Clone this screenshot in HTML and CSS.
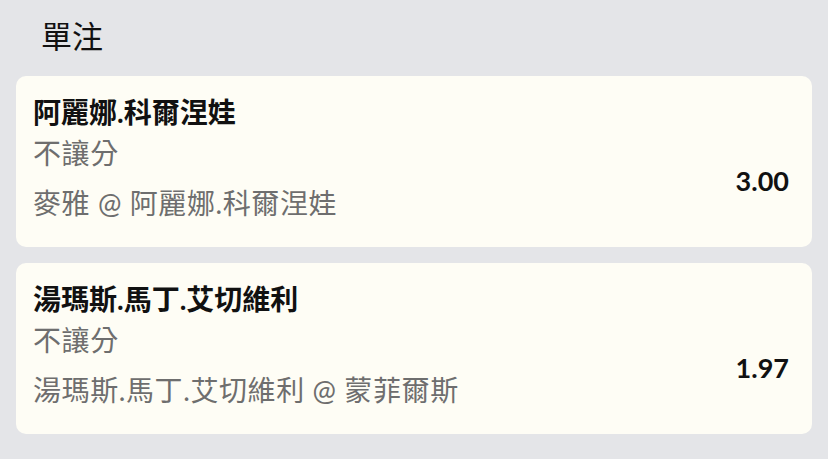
FILE: index.html
```html
<!DOCTYPE html>
<html>
<head>
	<meta charset="utf-8">
	<link rel="stylesheet" href="styles.css">
</head>
<body>
	<h1 class="title">單注</h1>
	<div class="bet">
		<div class="name">阿麗娜.科爾涅娃</div>
		<div class="row">
			<div class="info">
				<div class="market">不讓分</div>
				<div class="event">麥雅 @ 阿麗娜.科爾涅娃</div>
			</div>
			<div class="odds">3.00</div>
		</div>
	</div>
	<div class="bet">
		<div class="name">湯瑪斯.馬丁.艾切維利</div>
		<div class="row">
			<div class="info">
				<div class="market">不讓分</div>
				<div class="event">湯瑪斯.馬丁.艾切維利 @ 蒙菲爾斯</div>
			</div>
			<div class="odds">1.97</div>
		</div>
	</div>
</body>
</html>
```

FILE: styles.css
```css
body{
	margin: 0;
	background-color: #e4e5e8;
	font-family: Lato, "Noto Sans CJK TC", sans-serif;
	color: #111;
}
.title{
	margin: 0;
	padding: 14px 41px 18px;
	font-size: 31px;
	font-weight: 400;
	line-height: 44px;
}
.bet{
	margin: 0 16px 16px;
	padding: 18px 23px 21px 17px;
	background-color: #fefdf5;
	border-radius: 10px;
}
.name{
	font-size: 28px;
	font-weight: 700;
	line-height: 36px;
}
.row{
	display: flex;
	align-items: center;
	justify-content: space-between;
}
.market, .event{
	font-size: 28px;
	letter-spacing: 0.6px;
	line-height: 46px;
	color: #6e6e6e;
}
.event{
	margin-top: 4px;
}
.odds{
	font-size: 27px;
	font-weight: 700;
	padding-top: 4px;
}
```
